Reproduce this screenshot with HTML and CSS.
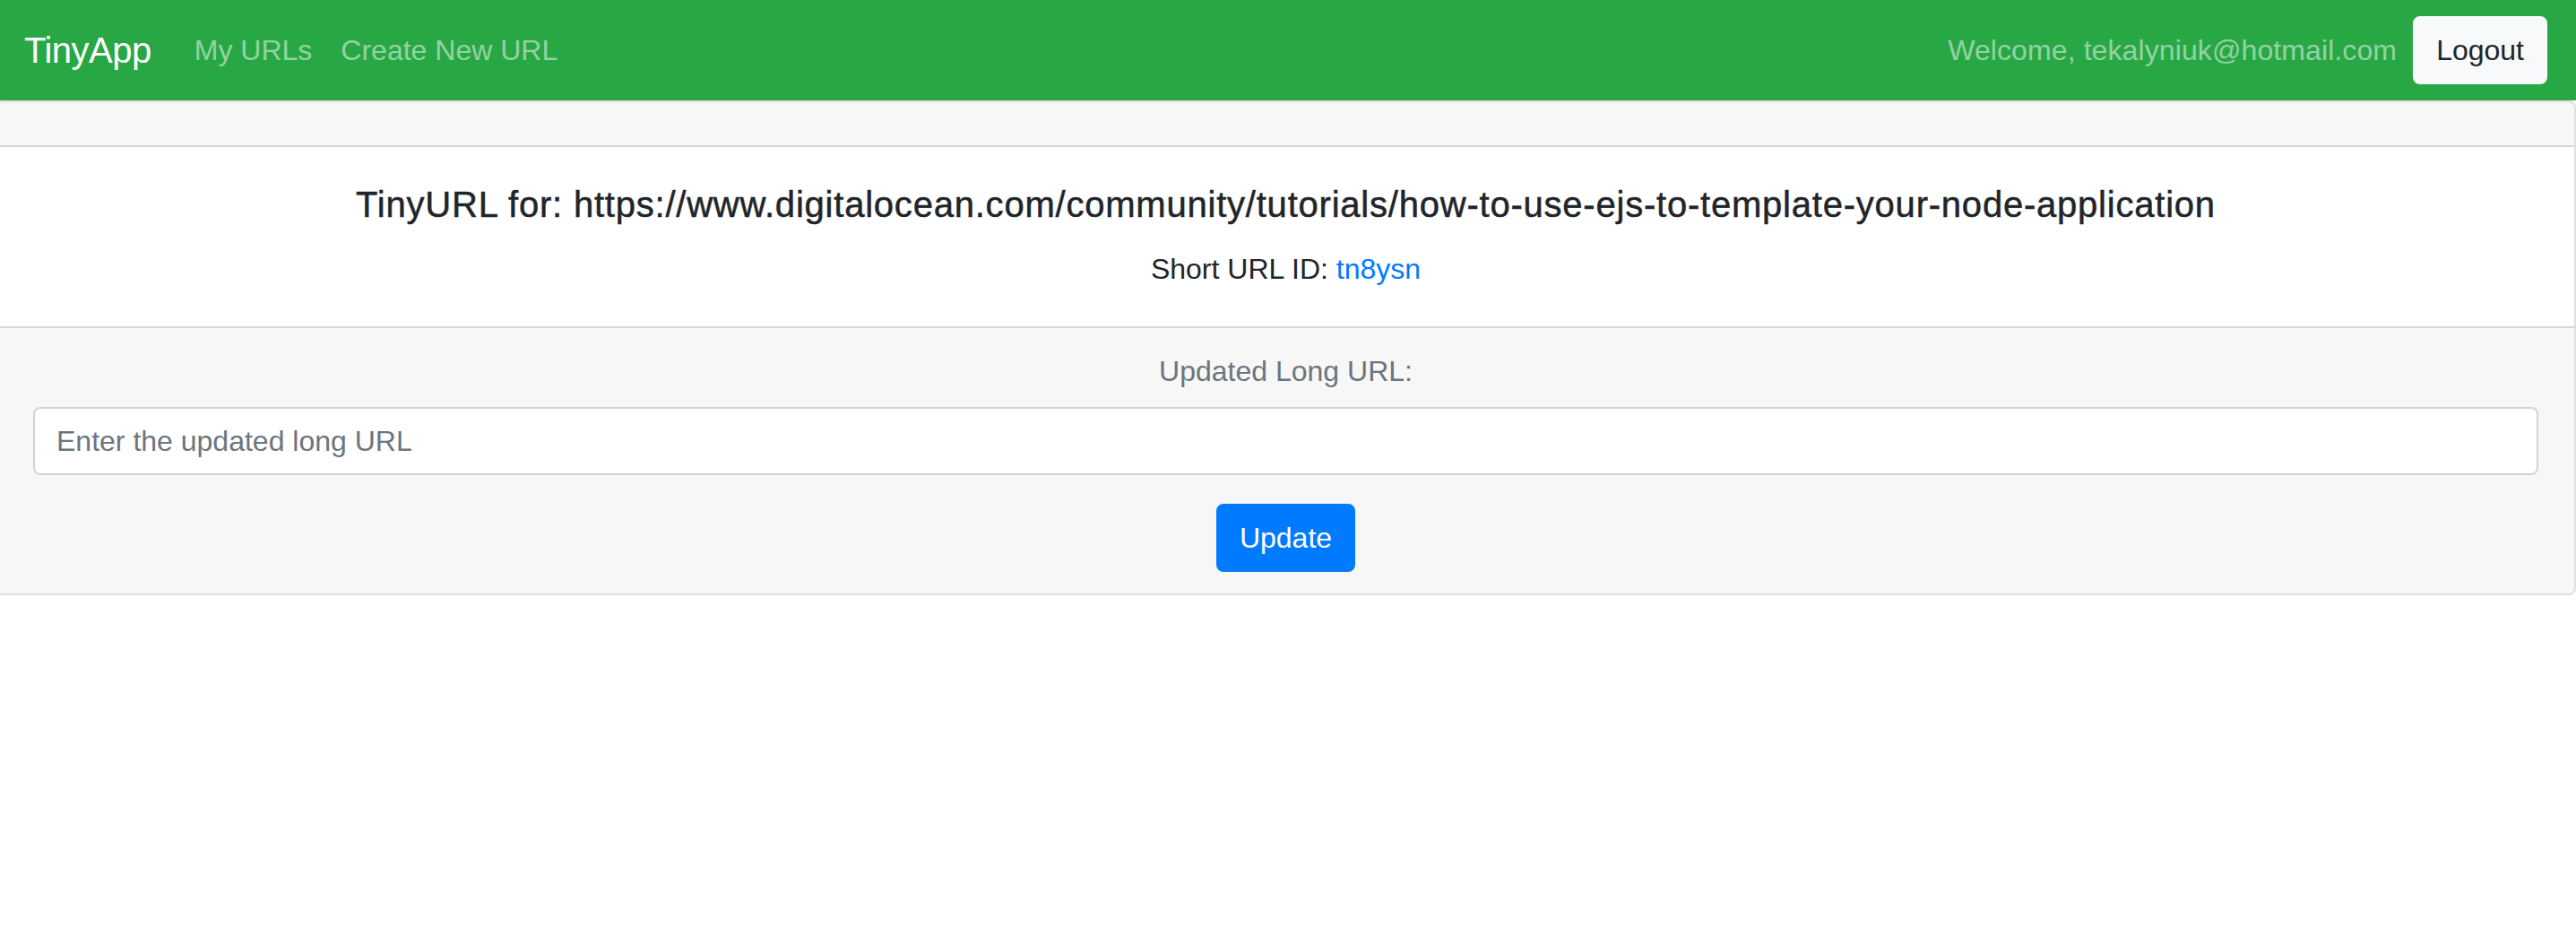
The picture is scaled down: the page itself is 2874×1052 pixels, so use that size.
FILE: index.html
```html
<!DOCTYPE html>
<html lang="en">
<head>
<meta charset="utf-8">
<title>TinyApp</title>
<link rel="stylesheet" href="styles.css">
</head>
<body>
<div class="page">
  <nav class="navbar">
    <a class="brand" href="#">TinyApp</a>
    <div class="nav-links">
      <a class="nav-link" href="#">My URLs</a>
      <a class="nav-link" href="#">Create New URL</a>
    </div>
    <div class="nav-right">
      <span class="welcome">Welcome, tekalyniuk@hotmail.com</span>
      <button class="btn btn-light" type="button">Logout</button>
    </div>
  </nav>
  <div class="card">
    <div class="card-header"></div>
    <div class="card-body">
      <h5 class="card-title">TinyURL for: https://www.digitalocean.com/community/tutorials/how-to-use-ejs-to-template-your-node-application</h5>
      <p class="card-text">Short URL ID: <a class="link" href="#">tn8ysn</a></p>
    </div>
    <div class="card-footer">
      <form class="update-form">
        <div class="form-group">
          <label class="form-label" for="longURL">Updated Long URL:</label>
          <input class="form-control" id="longURL" type="text" placeholder="Enter the updated long URL">
        </div>
        <button class="btn btn-primary" type="submit">Update</button>
      </form>
    </div>
  </div>
</div>
</body>
</html>
```

FILE: styles.css
```css
* {
  box-sizing: border-box;
}

html, body {
  margin: 0;
  padding: 0;
  background: #ffffff;
}

body {
  font-family: "Liberation Sans", Arial, sans-serif;
  font-size: 32px;
  line-height: 1.5;
  color: #212529;
}

.page {
  margin-left: -5px;
  width: calc(100% + 5px);
}

.navbar {
  display: flex;
  align-items: center;
  height: 112px;
  padding: 16px 32px;
  background: #28a745;
}

.brand {
  font-size: 40px;
  line-height: 60px;
  padding: 10px 0;
  margin-right: 32px;
  color: #ffffff;
  text-decoration: none;
  white-space: nowrap;
  letter-spacing: -0.5px;
}

.nav-links {
  display: flex;
  flex: 1;
}

.nav-link {
  display: block;
  padding: 16px 16px;
  color: rgba(255, 255, 255, 0.5);
  text-decoration: none;
  line-height: 48px;
}

.nav-right {
  display: flex;
  align-items: center;
}

.welcome {
  color: rgba(255, 255, 255, 0.5);
  margin-right: 18px;
  line-height: 48px;
  letter-spacing: 0.1px;
}

.btn {
  display: inline-block;
  font-family: inherit;
  font-size: 32px;
  line-height: 48px;
  padding: 12px 24px;
  border-radius: 8px;
  border: 2px solid transparent;
  cursor: pointer;
}

.btn-light {
  background: #f8f9fa;
  border-color: #f8f9fa;
  color: #212529;
}

.btn-primary {
  background: #007bff;
  border-color: #007bff;
  color: #ffffff;
}

.card {
  border: 2px solid rgba(0, 0, 0, 0.125);
  border-radius: 8px;
  background: #ffffff;
  text-align: center;
}

.card-header {
  height: 50px;
  padding: 24px 40px;
  background: rgba(0, 0, 0, 0.03);
  border-bottom: 2px solid rgba(0, 0, 0, 0.125);
  border-radius: 6px 6px 0 0;
}

.card-body {
  padding: 40px;
}

.card-title {
  margin: 0 0 24px;
  font-size: 40px;
  line-height: 1.2;
  font-weight: 500;
  letter-spacing: 0.78px;
  -webkit-text-stroke: 0.5px #212529;
}

.card-text {
  margin: 0;
}

.link {
  color: #007bff;
  text-decoration: none;
}

.card-footer {
  padding: 24px 40px;
  background: rgba(0, 0, 0, 0.03);
  border-top: 2px solid rgba(0, 0, 0, 0.125);
  border-radius: 0 0 6px 6px;
}

.update-form {
  margin: 0;
}

.form-group {
  margin-bottom: 32px;
}

.form-label {
  display: inline-block;
  margin-bottom: 16px;
  color: #6c757d;
}

.form-control {
  display: block;
  width: 100%;
  height: 76px;
  padding: 12px 24px;
  font-family: inherit;
  font-size: 32px;
  line-height: 48px;
  color: #495057;
  background: #ffffff;
  border: 2px solid #ced4da;
  border-radius: 8px;
  text-align: left;
}

.form-control::placeholder {
  color: #6c757d;
  opacity: 1;
}
```
